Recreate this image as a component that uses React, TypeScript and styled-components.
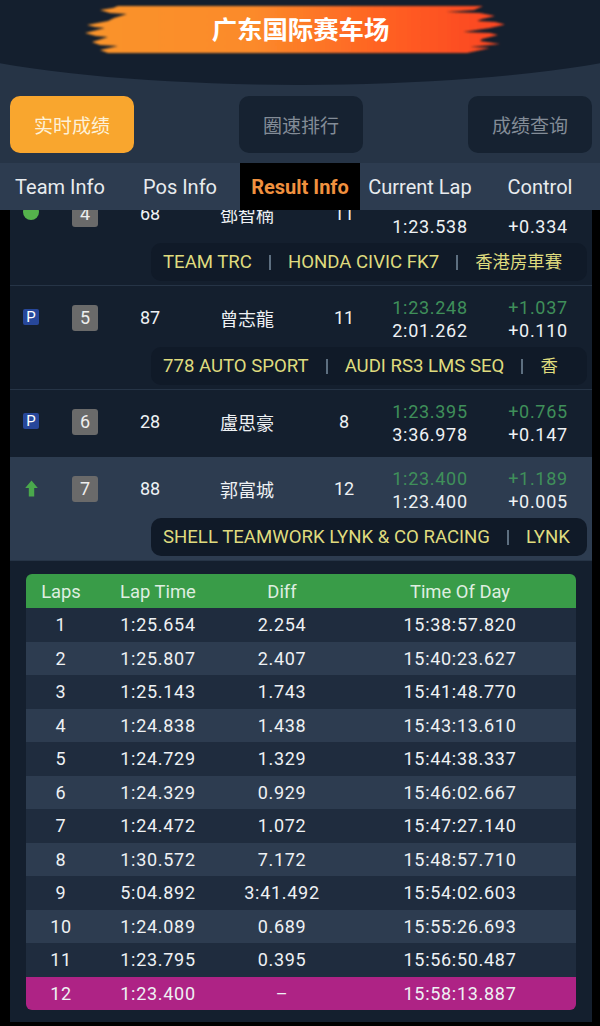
import React from "react";
import styled, { createGlobalStyle } from "styled-components";

const FONT = `Roboto, "Noto Sans CJK SC", "Noto Sans CJK TC", sans-serif`;

type Driver = {
  status: "dot" | "pit" | "up";
  pos: number;
  car: number;
  name: string;
  laps: number;
  best: string;
  bestDiff: string;
  last: string;
  lastDiff: string;
  info?: string[];
  active?: boolean;
};

const drivers: Driver[] = [
  {
    status: "dot",
    pos: 4,
    car: 68,
    name: "鄧智楠",
    laps: 11,
    best: "",
    bestDiff: "",
    last: "1:23.538",
    lastDiff: "+0.334",
    info: ["TEAM TRC", "HONDA CIVIC FK7", "香港房車賽"],
  },
  {
    status: "pit",
    pos: 5,
    car: 87,
    name: "曾志龍",
    laps: 11,
    best: "1:23.248",
    bestDiff: "+1.037",
    last: "2:01.262",
    lastDiff: "+0.110",
    info: ["778 AUTO SPORT", "AUDI RS3 LMS SEQ", "香"],
  },
  {
    status: "pit",
    pos: 6,
    car: 28,
    name: "盧思豪",
    laps: 8,
    best: "1:23.395",
    bestDiff: "+0.765",
    last: "3:36.978",
    lastDiff: "+0.147",
  },
  {
    status: "up",
    pos: 7,
    car: 88,
    name: "郭富城",
    laps: 12,
    best: "1:23.400",
    bestDiff: "+1.189",
    last: "1:23.400",
    lastDiff: "+0.005",
    info: ["SHELL TEAMWORK LYNK & CO RACING", "LYNK"],
    active: true,
  },
];

const laps = [
  ["1", "1:25.654", "2.254", "15:38:57.820"],
  ["2", "1:25.807", "2.407", "15:40:23.627"],
  ["3", "1:25.143", "1.743", "15:41:48.770"],
  ["4", "1:24.838", "1.438", "15:43:13.610"],
  ["5", "1:24.729", "1.329", "15:44:38.337"],
  ["6", "1:24.329", "0.929", "15:46:02.667"],
  ["7", "1:24.472", "1.072", "15:47:27.140"],
  ["8", "1:30.572", "7.172", "15:48:57.710"],
  ["9", "5:04.892", "3:41.492", "15:54:02.603"],
  ["10", "1:24.089", "0.689", "15:55:26.693"],
  ["11", "1:23.795", "0.395", "15:56:50.487"],
  ["12", "1:23.400", "–", "15:58:13.887"],
];

const StatusIcon = ({ status }: { status: Driver["status"] }) => {
  if (status === "dot") return <Dot />;
  if (status === "pit") return <PitMark>P</PitMark>;
  return (
    <svg width="13" height="17" viewBox="0 0 13 17">
      <path d="M6.5 0.5 L12.8 8 H9.2 V16.5 H3.8 V8 H0.2 Z" fill="#4aa84c" />
    </svg>
  );
};

export default function App() {
  return (
    <Page>
      <GlobalStyle />
      <Header>
        <Banner>
          <BrushStroke viewBox="85 6 421 47" preserveAspectRatio="none">
            <defs>
              <linearGradient id="brush" gradientUnits="userSpaceOnUse" x1="85" x2="506" y1="0" y2="0">
                <stop offset="0" stopColor="#f9942c" />
                <stop offset="0.4" stopColor="#fc8a2a" />
                <stop offset="0.75" stopColor="#ff5c22" />
                <stop offset="1" stopColor="#fb4420" />
              </linearGradient>
              <filter id="soft" x="-2%" y="-5%" width="104%" height="110%">
                <feGaussianBlur stdDeviation="1" />
              </filter>
            </defs>
            <path
              fill="url(#brush)"
              filter="url(#soft)"
              d="M118 6 L483 6 L474 10 L446 12 L480 13 L495 16 L482 19 L477 21 L495 22 L505 24.5 L490 28 L463 32 L490 33 L498 35 L482 39 L480 41 L500 44 L470 47 L490 48 L467 53
                 L108 53 L100 50 L118 46 L100 45 L92 42 L108 37 L96 36 L85 33 L105 28 L95 27 L87 25 L108 21 L114 18 L127 14 L110 13 L100 10 L113 8 Z"
            />
          </BrushStroke>
          <BannerTitle>广东国际赛车场</BannerTitle>
        </Banner>
      </Header>

      <ButtonBar>
        <NavButton $active>实时成绩</NavButton>
        <NavButton>圈速排行</NavButton>
        <NavButton>成绩查询</NavButton>
      </ButtonBar>

      <Tabs>
        <Tab>Team Info</Tab>
        <Tab>Pos Info</Tab>
        <Tab $active>Result Info</Tab>
        <Tab>Current Lap</Tab>
        <Tab>Control</Tab>
      </Tabs>

      <Viewport>
        <List>
          {drivers.map((d) => (
            <Row key={d.pos} $active={d.active}>
              <MainLine>
                <Cell>
                  <StatusIcon status={d.status} />
                </Cell>
                <Cell>
                  <PosBadge>{d.pos}</PosBadge>
                </Cell>
                <Cell>{d.car}</Cell>
                <Cell>{d.name}</Cell>
                <Cell>{d.laps}</Cell>
                <TimeCell>
                  <Best>{d.best}</Best>
                  <span>{d.last}</span>
                </TimeCell>
                <TimeCell>
                  <Best>{d.bestDiff}</Best>
                  <span>{d.lastDiff}</span>
                </TimeCell>
              </MainLine>
              {d.info && (
                <InfoPill>
                  {d.info.map((t, i) => (
                    <React.Fragment key={t}>
                      {i > 0 && <InfoSep />}
                      <InfoText $cjk={/[\u4e00-\u9fff]/.test(t)}>{t}</InfoText>
                    </React.Fragment>
                  ))}
                </InfoPill>
              )}
            </Row>
          ))}
          <Detail>
            <LapTable>
              <LapHead>
                <span>Laps</span>
                <span>Lap Time</span>
                <span>Diff</span>
                <span>Time Of Day</span>
              </LapHead>
              {laps.map((l, i) => (
                <LapRow key={l[0]} $alt={i % 2 === 1} $best={i === laps.length - 1}>
                  {l.map((v, j) => (
                    <span key={j}>{v}</span>
                  ))}
                </LapRow>
              ))}
            </LapTable>
          </Detail>
        </List>
      </Viewport>
    </Page>
  );
}

const GlobalStyle = createGlobalStyle`
  html, body {
    margin: 0;
    padding: 0;
    height: 100%;
    overflow: hidden;
    background: #000;
  }
`;

const Page = styled.div`
  width: 600px;
  height: 1026px;
  display: flex;
  flex-direction: column;
  background: #263446;
  font-family: ${FONT};
  color: #eef1f4;
  overflow: hidden;
`;

const Header = styled.header`
  height: 85px;
  flex: none;
  background: #141f2e;
  clip-path: ellipse(450px 85px at 50% 0);
  display: flex;
  justify-content: center;
  padding-top: 6px;
  box-sizing: border-box;
`;

const Banner = styled.div`
  position: relative;
  width: 421px;
  height: 47px;
  display: flex;
  align-items: center;
  justify-content: center;
  margin-left: -9px;
`;

const BrushStroke = styled.svg`
  position: absolute;
  inset: 0;
  width: 100%;
  height: 100%;
  overflow: visible;
`;

const BannerTitle = styled.h1`
  position: relative;
  margin: 2px 0 0 10px;
  font-size: 25.4px;
  font-weight: 700;
  color: #fff;
  line-height: 1;
`;

const ButtonBar = styled.div`
  flex: none;
  display: flex;
  justify-content: space-between;
  padding: 11px 8px 10px 10px;
`;

const NavButton = styled.div<{ $active?: boolean }>`
  width: 124px;
  height: 57px;
  border-radius: 10px;
  display: flex;
  align-items: center;
  justify-content: center;
  font-size: 19px;
  background: ${(p) => (p.$active ? "#f9a62e" : "#162231")};
  color: ${(p) => (p.$active ? "#fdf1d8" : "#838c97")};
`;

const Tabs = styled.nav`
  flex: none;
  height: 47px;
  display: grid;
  grid-template-columns: repeat(5, 1fr);
  background: #2d3c50;
  position: relative;
  z-index: 2;
`;

const Tab = styled.div<{ $active?: boolean }>`
  display: flex;
  align-items: center;
  justify-content: center;
  font-size: 20px;
  white-space: nowrap;
  background: ${(p) => (p.$active ? "#000" : "transparent")};
  color: ${(p) => (p.$active ? "#f0913f" : "#e8ebee")};
  font-weight: ${(p) => (p.$active ? 700 : 400)};
`;

const Viewport = styled.div`
  flex: 1;
  min-height: 0;
  overflow: hidden;
  background: #000;
  padding: 0 8px 0 10px;
`;

const List = styled.div`
  margin-top: -28px;
  background: #141f2e;
`;

const Row = styled.div<{ $active?: boolean }>`
  padding-bottom: 4px;
  background: ${(p) => (p.$active ? "#2d3c50" : "#141f2e")};
  border-bottom: 1px solid #263446;
  &:nth-child(3) {
    border-bottom: none;
  }
`;

const MainLine = styled.div`
  height: 63px;
  display: grid;
  grid-template-columns: 42px 66px 64px 130px 64px 108px 108px;
  align-items: center;
  font-size: 18px;
`;

const Cell = styled.div`
  display: flex;
  align-items: center;
  justify-content: center;
`;

const TimeCell = styled.div`
  display: flex;
  flex-direction: column;
  align-items: center;
  padding-top: 3px;
  line-height: 23px;
  letter-spacing: 0.7px;
`;

const Best = styled.span`
  color: #3f8f5a;
  min-height: 23px;
`;

const Dot = styled.div`
  width: 16px;
  height: 16px;
  border-radius: 50%;
  background: #55b34c;
  margin-top: -3px;
`;

const PitMark = styled.div`
  width: 16px;
  height: 16px;
  background: #27479a;
  border-radius: 2px;
  display: flex;
  align-items: center;
  justify-content: center;
  font-size: 15px;
  color: #fff;
  margin-top: -2px;
`;

const PosBadge = styled.div`
  width: 26px;
  height: 26px;
  border-radius: 3px;
  background: #6a6a6a;
  display: flex;
  align-items: center;
  justify-content: center;
  font-size: 18px;
  color: #eee;
`;

const InfoPill = styled.div`
  margin: -2px 5px 0 141px;
  height: 38px;
  border-radius: 10px;
  background: #101a28;
  display: flex;
  align-items: center;
  padding: 0 12px;
  color: #dfdb7e;
  white-space: nowrap;
  overflow: hidden;
`;

const InfoText = styled.span<{ $cjk?: boolean }>`
  font-size: ${(p) => (p.$cjk ? "17.4px" : "18.6px")};
  line-height: 24px;
`;

const InfoSep = styled.i`
  flex: none;
  width: 2px;
  height: 15px;
  background: #5d6f80;
  margin: 0 17px;
`;

const Detail = styled.div`
  padding: 13px 16px 12px;
`;

const LapTable = styled.div`
  border-radius: 6px;
  overflow: hidden;
`;

const lapColumns = "70px 124px 124px 232px";

const LapHead = styled.div`
  height: 34px;
  display: grid;
  grid-template-columns: ${lapColumns};
  align-items: center;
  text-align: center;
  background: #399c48;
  font-size: 18.4px;
  color: #dfeee0;
`;

const LapRow = styled.div<{ $alt?: boolean; $best?: boolean }>`
  height: 33.5px;
  display: grid;
  grid-template-columns: ${lapColumns};
  align-items: center;
  text-align: center;
  font-size: 18px;
  letter-spacing: 0.7px;
  background: ${(p) => (p.$best ? "#ae2385" : p.$alt ? "#2d3c50" : "#1f2c3e")};
`;
